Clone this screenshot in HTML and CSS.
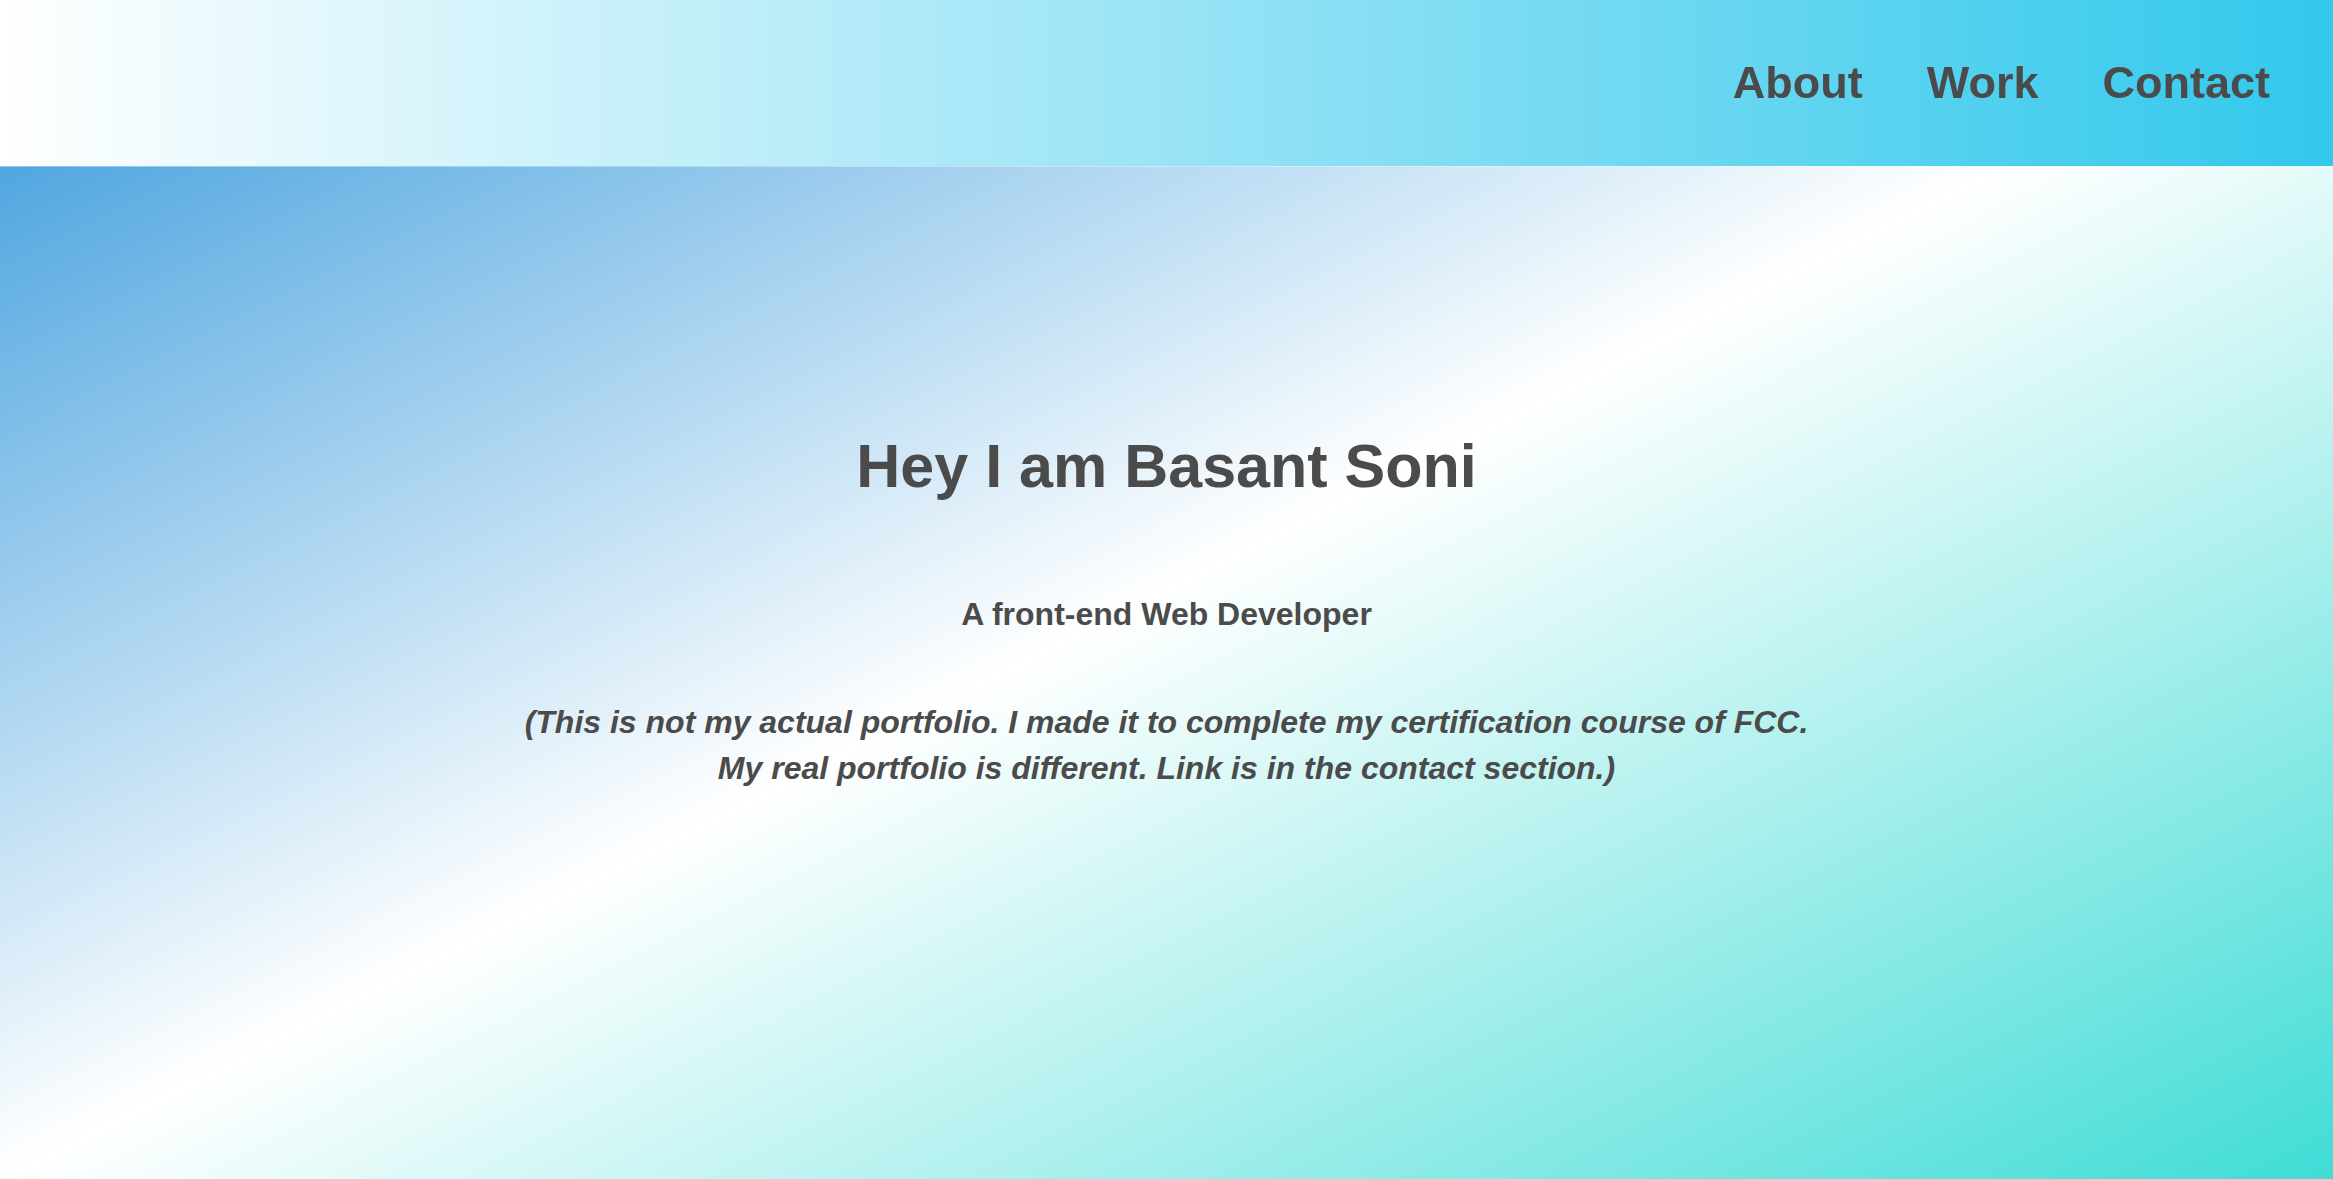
FILE: index.html
```html
<!DOCTYPE html>
<html lang="en">
<head>
<meta charset="utf-8">
<title>Basant Soni</title>
<link rel="stylesheet" href="styles.css">
</head>
<body>
<nav class="navbar">
  <ul class="nav-list">
    <li><a class="nav-link" href="#about">About</a></li>
    <li><a class="nav-link" href="#work">Work</a></li>
    <li><a class="nav-link" href="#contact">Contact</a></li>
  </ul>
</nav>
<section class="welcome">
  <h1 class="title">Hey I am Basant Soni</h1>
  <p class="subtitle">A front-end Web Developer</p>
  <p class="note">(This is not my actual portfolio. I made it to complete my certification course of FCC.<br>My real portfolio is different. Link is in the contact section.)</p>
</section>
</body>
</html>
```
FILE: styles.css
```css
* { box-sizing: border-box; }
html, body { margin: 0; padding: 0; }
body {
  font-family: "Liberation Sans", Arial, sans-serif;
  color: #4b4b4b;
  overflow: hidden;
}
.navbar {
  position: fixed;
  top: 0;
  left: 0;
  right: 0;
  height: 166px;
  display: flex;
  align-items: center;
  justify-content: flex-end;
  padding-right: 63px;
  background: linear-gradient(to right, #ffffff, #32c8ec);
  box-shadow: 0 1px 0 rgba(255,255,255,0.35);
  z-index: 10;
}
.nav-list {
  list-style: none;
  margin: 0;
  padding: 0;
  display: flex;
  gap: 64px;
}
.nav-link {
  font-size: 45px;
  font-weight: 700;
  color: #4b4b4b;
  text-decoration: none;
}
.welcome {
  height: 100vh;
  padding-top: 431px;
  text-align: center;
  background: linear-gradient(to bottom right, #3498db, #ffffff, #40dcd6);
}
.title {
  margin: 0;
  font-size: 61px;
  line-height: 70px;
  font-weight: 700;
}
.subtitle {
  margin: 93px 0 0;
  font-size: 32px;
  line-height: 40px;
  font-weight: 700;
}
.note {
  margin: 65px 0 0;
  font-size: 32px;
  line-height: 46px;
  font-weight: 700;
  font-style: italic;
}
```
